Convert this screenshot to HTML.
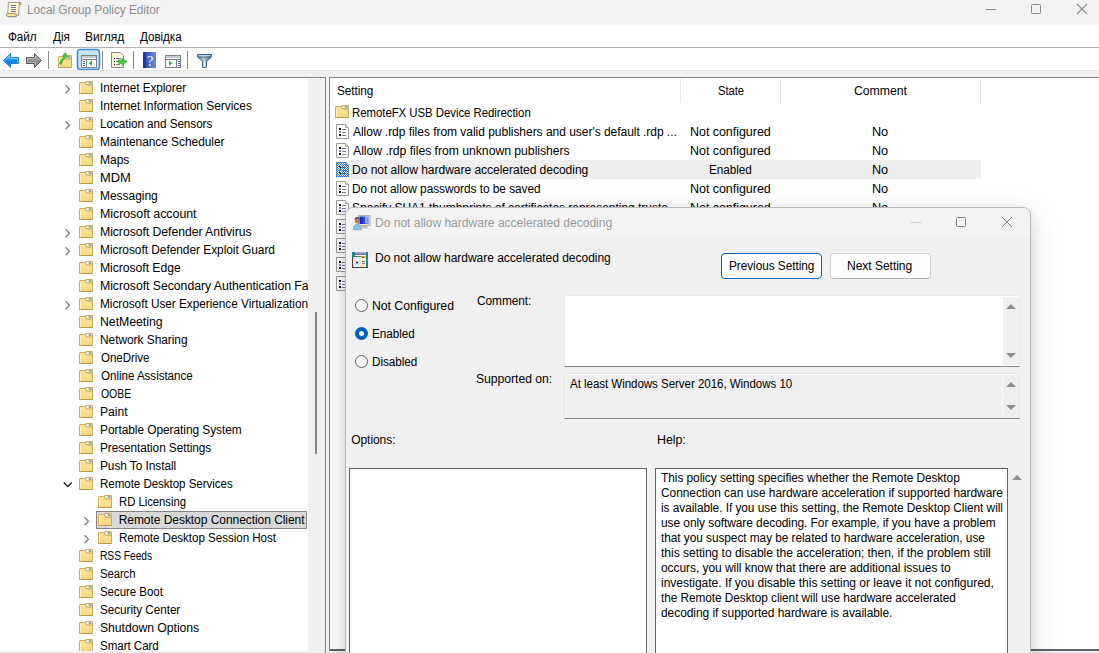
<!DOCTYPE html><html><head><meta charset="utf-8"><style>
*{box-sizing:border-box;margin:0;padding:0}
html,body{width:1099px;height:653px;overflow:hidden;background:#f0f0f0}
body{position:relative;font-family:"Liberation Sans",sans-serif;font-size:12px;color:#000;letter-spacing:-0.05px}
.a{position:absolute;white-space:nowrap}
.t{position:absolute;line-height:18px;height:18px;white-space:nowrap}
#title{left:0;top:0;width:1099px;height:25px;background:#f3f3f3}
#menubar{left:0;top:25px;width:1099px;height:22px;background:#fff}
#menuline{left:0;top:47px;width:1099px;height:1px;background:#b2b2b2}
#toolbar{left:0;top:48px;width:1099px;height:22px;background:#fff}
#strip{left:0;top:70px;width:1099px;height:7px;background:#f0f0f0;border-top:1px solid #e6e6e6}
#lpane{left:0;top:77px;width:326px;height:574px;background:#fff;border-top:1px solid #828790;border-right:1px solid #828790}
#lborder{left:325px;top:77px;width:1px;height:576px;background:#828790}
#lscroll{left:308px;top:79px;width:17px;height:572px;background:#f0f0f0}
#rpane{left:329px;top:77px;width:770px;height:574px;background:#fff;border-top:1px solid #828790;border-left:1px solid #828790;border-bottom:2px solid #5f636b}
</style></head><body>
<svg width="0" height="0" style="position:absolute"><defs>
<linearGradient id="fg" x1="0" y1="0" x2="0" y2="1"><stop offset="0" stop-color="#fce7a0"/><stop offset="1" stop-color="#f6d77e"/></linearGradient>
<g id="fold">
<path d="M6.5 4 V1.2 Q6.5 0.5 7.2 0.5 H12.8 Q13.5 0.5 13.5 1.2 V4" fill="#f2d78a" stroke="#c9a857" stroke-width="1"/>
<rect x="7.5" y="1.4" width="2.4" height="1.4" fill="#fff"/><rect x="9.8" y="1.4" width="2.4" height="1.4" fill="#4d9de6"/>
<path d="M0.5 12.5 V2.2 Q0.5 1.5 1.2 1.5 H5.8 L7.3 4.2 H13.5 V12.5 Z" fill="url(#fg)" stroke="#cdab58" stroke-width="1"/>
<path d="M1.5 3 V12" stroke="#fdf0c4" stroke-width="1"/>
<path d="M0.5 12.5 H13.5" stroke="#b9994a" stroke-width="1"/>
</g>
<pattern id="dith" width="2" height="2" patternUnits="userSpaceOnUse"><rect width="1" height="1" fill="#1a6fe0"/><rect x="1" y="1" width="1" height="1" fill="#1a6fe0"/></pattern>
<g id="pol">
<path d="M0.5 0.5 H9.5 L12.5 3.5 V14.5 H0.5 Z" fill="#fff" stroke="#9a9a9a"/>
<path d="M9.5 0.5 V3.5 H12.5" fill="#ddd" stroke="#aaa"/>
<rect x="3" y="4" width="2" height="2" fill="#111"/><rect x="3" y="7" width="2" height="2" fill="#8a88b0"/><rect x="3" y="10" width="2" height="2" fill="#111"/>
<path d="M6 5.5 H10 M6 8.5 H10 M6 11.5 H10" stroke="#7a78a0" stroke-width="1"/>
</g>
</defs></svg>
<div class="a" id="title"></div>
<div class="a" id="menubar"></div>
<div class="a" id="menuline"></div>
<div class="a" id="toolbar"></div>
<div class="a" id="strip"></div>
<div class="a" id="lpane"></div>
<div class="a" id="lscroll"></div>
<div class="a" id="lborder"></div>
<div class="a" id="rpane"></div>
<div class="t" style="left:26.51px;top:1px;color:#8c8c8c;transform:scaleX(0.9887);transform-origin:0 0">Local Group Policy Editor</div>
<div class="t" style="left:8.20px;top:28px;transform:scaleX(0.9724);transform-origin:0 0">Файл</div>
<div class="t" style="left:52.80px;top:28px;transform:scaleX(0.9824);transform-origin:0 0">Дія</div>
<div class="t" style="left:84.89px;top:28px;transform:scaleX(1.0053);transform-origin:0 0">Вигляд</div>
<div class="t" style="left:139.80px;top:28px;transform:scaleX(0.9721);transform-origin:0 0">Довідка</div>
<div class="a" style="left:0;top:0;width:308px;height:651px;overflow:hidden">
<svg class="a" width="8" height="12" style="left:64px;top:84px"><path d="M1.5 1.3 L5.5 5.3 L1.5 9.3" fill="none" stroke="#7c7c7c" stroke-width="1.25"/></svg>
<svg class="a" width="14" height="14" style="left:79px;top:81px"><use href="#fold"/></svg>
<div class="t" style="left:99.62px;top:79px;transform:scaleX(0.9793);transform-origin:0 0">Internet Explorer</div>
<svg class="a" width="14" height="14" style="left:79px;top:99px"><use href="#fold"/></svg>
<div class="t" style="left:99.60px;top:97px;transform:scaleX(0.9993);transform-origin:0 0">Internet Information Services</div>
<svg class="a" width="8" height="12" style="left:64px;top:120px"><path d="M1.5 1.3 L5.5 5.3 L1.5 9.3" fill="none" stroke="#7c7c7c" stroke-width="1.25"/></svg>
<svg class="a" width="14" height="14" style="left:79px;top:117px"><use href="#fold"/></svg>
<div class="t" style="left:99.62px;top:115px;transform:scaleX(0.9754);transform-origin:0 0">Location and Sensors</div>
<svg class="a" width="14" height="14" style="left:79px;top:135px"><use href="#fold"/></svg>
<div class="t" style="left:99.60px;top:133px;transform:scaleX(0.9952);transform-origin:0 0">Maintenance Scheduler</div>
<svg class="a" width="14" height="14" style="left:79px;top:153px"><use href="#fold"/></svg>
<div class="t" style="left:99.60px;top:151px;transform:scaleX(1.0036);transform-origin:0 0">Maps</div>
<svg class="a" width="14" height="14" style="left:79px;top:171px"><use href="#fold"/></svg>
<div class="t" style="left:99.53px;top:169px;transform:scaleX(1.0741);transform-origin:0 0">MDM</div>
<svg class="a" width="14" height="14" style="left:79px;top:189px"><use href="#fold"/></svg>
<div class="t" style="left:99.60px;top:187px;transform:scaleX(1.0018);transform-origin:0 0">Messaging</div>
<svg class="a" width="14" height="14" style="left:79px;top:207px"><use href="#fold"/></svg>
<div class="t" style="left:99.56px;top:205px;transform:scaleX(1.0355);transform-origin:0 0">Microsoft account</div>
<svg class="a" width="8" height="12" style="left:64px;top:228px"><path d="M1.5 1.3 L5.5 5.3 L1.5 9.3" fill="none" stroke="#7c7c7c" stroke-width="1.25"/></svg>
<svg class="a" width="14" height="14" style="left:79px;top:225px"><use href="#fold"/></svg>
<div class="t" style="left:99.58px;top:223px;transform:scaleX(1.0196);transform-origin:0 0">Microsoft Defender Antivirus</div>
<svg class="a" width="8" height="12" style="left:64px;top:246px"><path d="M1.5 1.3 L5.5 5.3 L1.5 9.3" fill="none" stroke="#7c7c7c" stroke-width="1.25"/></svg>
<svg class="a" width="14" height="14" style="left:79px;top:243px"><use href="#fold"/></svg>
<div class="t" style="left:99.61px;top:241px;transform:scaleX(0.9949);transform-origin:0 0">Microsoft Defender Exploit Guard</div>
<svg class="a" width="14" height="14" style="left:79px;top:261px"><use href="#fold"/></svg>
<div class="t" style="left:99.58px;top:259px;transform:scaleX(1.0167);transform-origin:0 0">Microsoft Edge</div>
<svg class="a" width="14" height="14" style="left:79px;top:279px"><use href="#fold"/></svg>
<div class="t" style="left:99.58px;top:277px;transform:scaleX(1.0246);transform-origin:0 0">Microsoft Secondary Authentication Factor</div>
<svg class="a" width="8" height="12" style="left:64px;top:300px"><path d="M1.5 1.3 L5.5 5.3 L1.5 9.3" fill="none" stroke="#7c7c7c" stroke-width="1.25"/></svg>
<svg class="a" width="14" height="14" style="left:79px;top:297px"><use href="#fold"/></svg>
<div class="t" style="left:99.61px;top:295px;transform:scaleX(0.9880);transform-origin:0 0">Microsoft User Experience Virtualization</div>
<svg class="a" width="14" height="14" style="left:79px;top:315px"><use href="#fold"/></svg>
<div class="t" style="left:99.57px;top:313px;transform:scaleX(1.0267);transform-origin:0 0">NetMeeting</div>
<svg class="a" width="14" height="14" style="left:79px;top:333px"><use href="#fold"/></svg>
<div class="t" style="left:99.60px;top:331px;transform:scaleX(0.9954);transform-origin:0 0">Network Sharing</div>
<svg class="a" width="14" height="14" style="left:79px;top:351px"><use href="#fold"/></svg>
<div class="t" style="left:100.60px;top:349px;transform:scaleX(0.9600);transform-origin:0 0">OneDrive</div>
<svg class="a" width="14" height="14" style="left:79px;top:369px"><use href="#fold"/></svg>
<div class="t" style="left:100.60px;top:367px;transform:scaleX(0.9695);transform-origin:0 0">Online Assistance</div>
<svg class="a" width="14" height="14" style="left:79px;top:387px"><use href="#fold"/></svg>
<div class="t" style="left:100.60px;top:385px;transform:scaleX(0.8735);transform-origin:0 0">OOBE</div>
<svg class="a" width="14" height="14" style="left:79px;top:405px"><use href="#fold"/></svg>
<div class="t" style="left:99.58px;top:403px;transform:scaleX(1.0154);transform-origin:0 0">Paint</div>
<svg class="a" width="14" height="14" style="left:79px;top:423px"><use href="#fold"/></svg>
<div class="t" style="left:99.61px;top:421px;transform:scaleX(0.9922);transform-origin:0 0">Portable Operating System</div>
<svg class="a" width="14" height="14" style="left:79px;top:441px"><use href="#fold"/></svg>
<div class="t" style="left:99.62px;top:439px;transform:scaleX(0.9830);transform-origin:0 0">Presentation Settings</div>
<svg class="a" width="14" height="14" style="left:79px;top:459px"><use href="#fold"/></svg>
<div class="t" style="left:99.61px;top:457px;transform:scaleX(0.9882);transform-origin:0 0">Push To Install</div>
<svg class="a" width="12" height="8" style="left:62px;top:481px"><path d="M1.8 1.5 L5.8 5.5 L9.8 1.5" fill="none" stroke="#222" stroke-width="1.4"/></svg>
<svg class="a" width="14" height="14" style="left:79px;top:477px"><use href="#fold"/></svg>
<div class="t" style="left:99.64px;top:475px;transform:scaleX(0.9640);transform-origin:0 0">Remote Desktop Services</div>
<svg class="a" width="14" height="14" style="left:98px;top:495px"><use href="#fold"/></svg>
<div class="t" style="left:118.75px;top:493px;transform:scaleX(0.9471);transform-origin:0 0">RD Licensing</div>
<div class="a" style="left:96px;top:511px;width:211px;height:18px;background:#d9d9d9;border:1px solid #858585"></div>
<svg class="a" width="8" height="12" style="left:83px;top:516px"><path d="M1.5 1.3 L5.5 5.3 L1.5 9.3" fill="none" stroke="#7c7c7c" stroke-width="1.25"/></svg>
<svg class="a" width="14" height="14" style="left:98px;top:513px"><use href="#fold"/></svg>
<div class="t" style="left:118.70px;top:511px;transform:scaleX(1.0000);transform-origin:0 0">Remote Desktop Connection Client</div>
<svg class="a" width="8" height="12" style="left:83px;top:534px"><path d="M1.5 1.3 L5.5 5.3 L1.5 9.3" fill="none" stroke="#7c7c7c" stroke-width="1.25"/></svg>
<svg class="a" width="14" height="14" style="left:98px;top:531px"><use href="#fold"/></svg>
<div class="t" style="left:118.73px;top:529px;transform:scaleX(0.9683);transform-origin:0 0">Remote Desktop Session Host</div>
<svg class="a" width="14" height="14" style="left:79px;top:549px"><use href="#fold"/></svg>
<div class="t" style="left:99.74px;top:547px;transform:scaleX(0.8550);transform-origin:0 0">RSS Feeds</div>
<svg class="a" width="14" height="14" style="left:79px;top:567px"><use href="#fold"/></svg>
<div class="t" style="left:99.66px;top:565px;transform:scaleX(0.9389);transform-origin:0 0">Search</div>
<svg class="a" width="14" height="14" style="left:79px;top:585px"><use href="#fold"/></svg>
<div class="t" style="left:99.64px;top:583px;transform:scaleX(0.9585);transform-origin:0 0">Secure Boot</div>
<svg class="a" width="14" height="14" style="left:79px;top:603px"><use href="#fold"/></svg>
<div class="t" style="left:99.62px;top:601px;transform:scaleX(0.9790);transform-origin:0 0">Security Center</div>
<svg class="a" width="14" height="14" style="left:79px;top:621px"><use href="#fold"/></svg>
<div class="t" style="left:99.58px;top:619px;transform:scaleX(1.0198);transform-origin:0 0">Shutdown Options</div>
<svg class="a" width="14" height="14" style="left:79px;top:639px"><use href="#fold"/></svg>
<div class="t" style="left:99.63px;top:637px;transform:scaleX(0.9650);transform-origin:0 0">Smart Card</div>
</div>
<div class="a" style="left:315px;top:312px;width:2px;height:142px;background:#858585"></div>
<div class="t" style="left:337.32px;top:82px;transform:scaleX(0.9806);transform-origin:0 0">Setting</div>
<div class="a" style="left:680px;top:79px;width:1px;height:24px;background:#e5e5e5"></div>
<div class="a" style="left:780px;top:79px;width:1px;height:24px;background:#e5e5e5"></div>
<div class="a" style="left:980px;top:79px;width:1px;height:24px;background:#e5e5e5"></div>
<div class="t" style="left:718.07px;top:82px;transform:scaleX(0.9333);transform-origin:0 0">State</div>
<div class="t" style="left:854.30px;top:82px;transform:scaleX(1.0231);transform-origin:0 0">Comment</div>
<svg class="a" width="14" height="14" style="left:335px;top:105px"><use href="#fold"/></svg>
<div class="t" style="left:352.15px;top:104px;transform:scaleX(0.9513);transform-origin:0 0">RemoteFX USB Device Redirection</div>
<svg class="a" width="14" height="16" style="left:336px;top:124px"><use href="#pol"/></svg>
<div class="t" style="left:353.10px;top:123px;transform:scaleX(1.0040);transform-origin:0 0">Allow .rdp files from valid publishers and user's default .rdp ...</div>
<div class="t" style="left:690.16px;top:123px;transform:scaleX(1.0434);transform-origin:0 0">Not configured</div>
<div class="t" style="left:872.44px;top:123px;transform:scaleX(1.0571);transform-origin:0 0">No</div>
<svg class="a" width="14" height="16" style="left:336px;top:143px"><use href="#pol"/></svg>
<div class="t" style="left:353.10px;top:142px;transform:scaleX(1.0217);transform-origin:0 0">Allow .rdp files from unknown publishers</div>
<div class="t" style="left:690.16px;top:142px;transform:scaleX(1.0434);transform-origin:0 0">Not configured</div>
<div class="t" style="left:872.44px;top:142px;transform:scaleX(1.0571);transform-origin:0 0">No</div>
<div class="a" style="left:351px;top:160px;width:630px;height:19px;background:#eeeeee"></div>
<svg class="a" width="14" height="16" style="left:336px;top:162px"><use href="#pol"/></svg>
<svg class="a" width="14" height="16" style="left:336px;top:162px"><path d="M0 0 H10 L13 3 V15 H0 Z" fill="url(#dith)"/></svg>
<div class="t" style="left:352.09px;top:161px;transform:scaleX(1.0064);transform-origin:0 0">Do not allow hardware accelerated decoding</div>
<div class="t" style="left:709.42px;top:161px;transform:scaleX(0.9810);transform-origin:0 0">Enabled</div>
<div class="t" style="left:872.44px;top:161px;transform:scaleX(1.0571);transform-origin:0 0">No</div>
<svg class="a" width="14" height="16" style="left:336px;top:181px"><use href="#pol"/></svg>
<div class="t" style="left:352.11px;top:180px;transform:scaleX(0.9905);transform-origin:0 0">Do not allow passwords to be saved</div>
<div class="t" style="left:690.16px;top:180px;transform:scaleX(1.0434);transform-origin:0 0">Not configured</div>
<div class="t" style="left:872.44px;top:180px;transform:scaleX(1.0571);transform-origin:0 0">No</div>
<svg class="a" width="14" height="16" style="left:336px;top:200px"><use href="#pol"/></svg>
<div class="t" style="left:352.10px;top:199px;transform:scaleX(1.0045);transform-origin:0 0">Specify SHA1 thumbprints of certificates representing truste</div>
<div class="t" style="left:690.16px;top:199px;transform:scaleX(1.0434);transform-origin:0 0">Not configured</div>
<div class="t" style="left:872.44px;top:199px;transform:scaleX(1.0571);transform-origin:0 0">No</div>
<svg class="a" width="14" height="16" style="left:336px;top:219px"><use href="#pol"/></svg>
<div class="t" style="left:353.1px;top:218px">x</div>
<div class="t" style="left:690.16px;top:218px;transform:scaleX(1.0434);transform-origin:0 0">Not configured</div>
<div class="t" style="left:872.44px;top:218px;transform:scaleX(1.0571);transform-origin:0 0">No</div>
<svg class="a" width="14" height="16" style="left:336px;top:238px"><use href="#pol"/></svg>
<div class="t" style="left:353.1px;top:237px">x</div>
<div class="t" style="left:690.16px;top:237px;transform:scaleX(1.0434);transform-origin:0 0">Not configured</div>
<div class="t" style="left:872.44px;top:237px;transform:scaleX(1.0571);transform-origin:0 0">No</div>
<svg class="a" width="14" height="16" style="left:336px;top:257px"><use href="#pol"/></svg>
<div class="t" style="left:353.1px;top:256px">x</div>
<div class="t" style="left:690.16px;top:256px;transform:scaleX(1.0434);transform-origin:0 0">Not configured</div>
<div class="t" style="left:872.44px;top:256px;transform:scaleX(1.0571);transform-origin:0 0">No</div>
<svg class="a" width="14" height="16" style="left:336px;top:276px"><use href="#pol"/></svg>
<div class="t" style="left:353.1px;top:275px">x</div>
<div class="t" style="left:690.16px;top:275px;transform:scaleX(1.0434);transform-origin:0 0">Not configured</div>
<div class="t" style="left:872.44px;top:275px;transform:scaleX(1.0571);transform-origin:0 0">No</div>
<svg class="a" width="24" height="20" style="left:2px;top:0px">
<path d="M6.5 2.5 H17.5 L16.5 15.5 H5.5 Z" fill="#fdf5d0" stroke="#a0a0a0" stroke-width="1"/>
<path d="M17 2.5 Q19.5 2.5 18.5 5" fill="none" stroke="#a89048" stroke-width="1.3"/>
<path d="M9 5.5 H14 M9 7.5 H14 M9 9.5 H14 M9 11.5 H14" stroke="#72709c" stroke-width="1"/>
<rect x="4.5" y="13.5" width="10" height="3" rx="1.5" fill="#f3e3a0" stroke="#b49a50" stroke-width="1"/>
<path d="M6 16.8 H15" stroke="#8a8a9a" stroke-width="0.8"/>
</svg>
<div class="a" style="left:986px;top:9px;width:10px;height:1px;background:#8a8a8a"></div>
<div class="a" style="left:1031px;top:4px;width:10px;height:10px;border:1px solid #8a8a8a;border-radius:1.5px"></div>
<svg class="a" width="12" height="12" style="left:1076px;top:3px"><path d="M1 1 L11 11 M11 1 L1 11" stroke="#8a8a8a" stroke-width="1.1"/></svg>
<svg class="a" width="230" height="22" style="left:0;top:48px" viewBox="0 48 230 22">
<defs>
<linearGradient id="bl" x1="0" y1="0" x2="0" y2="1"><stop offset="0" stop-color="#5cc3fb"/><stop offset="0.6" stop-color="#0a84e0"/><stop offset="1" stop-color="#1e9cf2"/></linearGradient>
<linearGradient id="gr" x1="0" y1="0" x2="0" y2="1"><stop offset="0" stop-color="#b8b8b8"/><stop offset="0.6" stop-color="#888"/><stop offset="1" stop-color="#a8a8a8"/></linearGradient>
<linearGradient id="fn" x1="0" y1="0" x2="1" y2="0"><stop offset="0" stop-color="#5a7890"/><stop offset="0.45" stop-color="#b8d4e8"/><stop offset="1" stop-color="#3a5670"/></linearGradient>
<linearGradient id="hb" x1="0" y1="0" x2="1" y2="0"><stop offset="0" stop-color="#2a46b0"/><stop offset="1" stop-color="#6a8ae0"/></linearGradient>
</defs>
<path d="M3.5 60.5 L10.5 53.5 V57.5 H18.5 V63.5 H10.5 V67.5 Z" fill="url(#bl)" stroke="#2d7fd0" stroke-width="1" stroke-linejoin="round"/>
<path d="M5.2 60.5 L9.5 56 V58.5 H17.5 V62.5" fill="none" stroke="#8ad8ff" stroke-width="0.8" opacity="0.8"/>
<path d="M41.5 60.5 L34.5 53.5 V57.5 H26.5 V63.5 H34.5 V67.5 Z" fill="url(#gr)" stroke="#5a5a5a" stroke-width="1" stroke-linejoin="round"/>
<path d="M39.8 60.5 L35.5 56 V58.5 H27.5 V62.5 H35.5 V65" fill="none" stroke="#c8c8c8" stroke-width="0.8" opacity="0.8"/>
<rect x="48" y="51" width="1" height="18" fill="#8c8c8c"/>
<use href="#fold" x="58" y="55"/>
<path d="M59.5 63.5 Q60.5 59 63.5 57.5 L62.5 56 L65.5 52.5 L67.5 57 L65.8 57.2 Q62.8 59.5 61 64.5 Z" fill="#48d048" stroke="#2aa02a" stroke-width="0.7"/>
<rect x="77.5" y="49.5" width="22" height="20" rx="3" fill="#cce4f7" stroke="#3a8ee0" stroke-width="1.6"/>
<rect x="81.5" y="55.5" width="15" height="12" fill="#fff" stroke="#7c808a"/>
<rect x="82" y="56" width="14" height="2" fill="#c8ccd4"/>
<rect x="82" y="59" width="14" height="1" fill="#7c808a"/>
<rect x="86" y="60" width="1" height="7" fill="#7c808a"/>
<rect x="83" y="61" width="2" height="1" fill="#3a70c0"/><rect x="83" y="63" width="2" height="1" fill="#3a70c0"/><rect x="83" y="65" width="2" height="1" fill="#3a70c0"/>
<path d="M92 60.5 V66 L88.5 63.2 Z" fill="#3cb83c"/>
<rect x="102" y="51" width="1" height="18" fill="#8c8c8c"/>
<path d="M111.5 52.5 H120.5 L123.5 55.5 V67.5 H111.5 Z" fill="#fdf5d8" stroke="#8a8a8a"/>
<circle cx="114.5" cy="58.5" r="0.7" fill="#222"/><circle cx="114.5" cy="61.5" r="0.7" fill="#222"/><circle cx="114.5" cy="64.5" r="0.7" fill="#222"/>
<path d="M116 58.5 H121 M116 61.5 H120 M116 64.5 H120" stroke="#7670b0"/>
<path d="M118.5 60 H122 V58 L127 61.7 L122 65.5 V63.5 H118.5 Z" fill="#4ccc40" stroke="#30a030" stroke-width="0.5"/>
<rect x="133" y="51" width="1" height="18" fill="#8c8c8c"/>
<rect x="143" y="52" width="13" height="16" fill="url(#hb)"/>
<rect x="143" y="52" width="3" height="16" fill="#1c3898"/>
<text x="150" y="66" font-family="Liberation Serif" font-size="15" fill="#fff" text-anchor="middle">?</text>
<rect x="165.5" y="55.5" width="15" height="12" fill="#fff" stroke="#7c808a"/>
<rect x="166" y="56" width="14" height="2" fill="#c8ccd4"/>
<rect x="166" y="59" width="14" height="1" fill="#7c808a"/>
<rect x="176" y="60" width="1" height="7" fill="#7c808a"/>
<rect x="178" y="61" width="2" height="1" fill="#3a70c0"/><rect x="178" y="63" width="2" height="1" fill="#3a70c0"/><rect x="178" y="65" width="2" height="1" fill="#3a70c0"/>
<path d="M169 60.5 V66 L172.5 63.2 Z" fill="#3cb83c"/>
<rect x="187" y="51" width="1" height="18" fill="#8c8c8c"/>
<path d="M197.5 54.5 H211.5 V57 L206.5 61.5 V67 Q206.5 67.6 205.8 67.6 H203.2 Q202.5 67.6 202.5 67 V61.5 L197.5 57 Z" fill="url(#fn)" stroke="#4a6478" stroke-width="1"/>
<path d="M198.5 55.6 H210.5" stroke="#b0daf8" stroke-width="1"/>
<path d="M198.5 57.2 H210.5" stroke="#4a6478" stroke-width="0.8"/>
<path d="M204.5 62 V66.8" stroke="#e0f4ff" stroke-width="1.3"/>
</svg>
<div class="a" style="left:345px;top:207px;width:686px;height:460px;background:#f0f0f0;border:1px solid #b9b9b9;border-radius:8px 8px 0 0;box-shadow:0 3px 10px rgba(0,0,0,0.10),0 10px 30px rgba(0,0,0,0.16)"></div>
<div class="a" style="left:346px;top:208px;width:684px;height:30px;background:#f3f3f3;border-radius:7px 7px 0 0"></div>
<svg class="a" width="18" height="16" style="left:353px;top:215px">
<defs><linearGradient id="scr" x1="0" y1="0" x2="1" y2="0"><stop offset="0" stop-color="#0a20d8"/><stop offset="0.5" stop-color="#2848f0"/><stop offset="1" stop-color="#a0b8ff"/></linearGradient></defs>
<rect x="5.5" y="0.5" width="11.5" height="10" fill="#e6e2d4" stroke="#b4b0a4"/>
<rect x="6.5" y="1.5" width="9.5" height="7.5" fill="url(#scr)"/>
<rect x="12" y="2" width="2" height="6" fill="#c8d4ff" opacity="0.6"/>
<rect x="9" y="11" width="5.5" height="2.5" fill="#c4c0b4"/>
<ellipse cx="4.2" cy="5.6" rx="2.5" ry="2.9" fill="#c08050"/>
<path d="M1.6 5 Q1.6 2 4.2 2 Q6.8 2 6.8 5 Q5.6 3.6 4.2 3.8 Q2.8 3.6 1.6 5Z" fill="#505050"/>
<path d="M0.3 14.8 Q0.3 9.6 4.2 9.2 Q8.2 9.6 8.4 14.8 Z" fill="#8cc4ec" stroke="#5e94c4" stroke-width="0.6"/>
</svg>
<div class="t" style="left:374.59px;top:214px;color:#9a9a9a;transform:scaleX(1.0103);transform-origin:0 0">Do not allow hardware accelerated decoding</div>
<div class="a" style="left:911px;top:222px;width:10px;height:1px;background:#c8c8c8"></div>
<div class="a" style="left:956px;top:217px;width:10px;height:10px;border:1px solid #828282;border-radius:1.5px"></div>
<svg class="a" width="12" height="12" style="left:1001px;top:216px"><path d="M1 1 L11 11 M11 1 L1 11" stroke="#858585" stroke-width="1"/></svg>
<svg class="a" width="17" height="17" style="left:352px;top:252px">
<defs><linearGradient id="lav" x1="0" y1="0" x2="0" y2="1"><stop offset="0" stop-color="#b8b8e8"/><stop offset="1" stop-color="#6a68a8"/></linearGradient></defs>
<rect x="0" y="0" width="16" height="16" fill="#f4f4f4"/>
<rect x="0" y="0" width="3" height="5" fill="#1a8a80"/><rect x="14" y="0" width="2" height="16" fill="#1a8a80"/>
<rect x="3" y="0" width="11" height="3" fill="url(#lav)"/>
<rect x="3" y="3" width="11" height="1" fill="#fff"/>
<rect x="3" y="4" width="6" height="1" fill="#3a8a4a"/><rect x="9" y="4" width="5" height="1.5" fill="#f0c000"/><circle cx="11" cy="5.3" r="0.8" fill="#111"/>
<rect x="0" y="5" width="1.2" height="11" fill="#444"/><rect x="0" y="15" width="16" height="1" fill="#444"/>
<circle cx="5" cy="10.5" r="4" fill="#fafafa"/>
<path d="M5 10.5 L1.5 8.5 A4 4 0 0 1 4 6.6 Z" fill="#f8c8e8"/><path d="M5 10.5 L5.5 6.5 A4 4 0 0 1 8.6 9 Z" fill="#d0f8c8"/>
<path d="M5 10.5 L8.8 11.5 A4 4 0 0 1 6 14.4 Z" fill="#c8e8f8"/><path d="M5 10.5 L3.5 14.2 A4 4 0 0 1 1.2 11.5 Z" fill="#d8d0f8"/>
<circle cx="5" cy="10.5" r="1.1" fill="#333"/>
<rect x="9" y="6" width="5" height="8" fill="#fff4c4"/>
<rect x="10" y="9" width="3" height="1" fill="#7a78a0"/><rect x="10" y="11" width="3" height="1" fill="#7a78a0"/>
<rect x="8" y="13.5" width="5" height="1" fill="#f2d870"/>
</svg>
<div class="t" style="left:375.40px;top:249px;transform:scaleX(1.0043);transform-origin:0 0">Do not allow hardware accelerated decoding</div>
<div class="a" style="left:721px;top:253px;width:101px;height:26px;background:#fdfdfd;border:1px solid #0067c0;border-radius:4px"></div>
<div class="t" style="left:728.62px;top:257px;transform:scaleX(0.9847);transform-origin:0 0">Previous Setting</div>
<div class="a" style="left:830px;top:253px;width:101px;height:26px;background:#fdfdfd;border:1px solid #d0d0d0;border-bottom-color:#b8b8b8;border-radius:4px"></div>
<div class="t" style="left:847.29px;top:257px;transform:scaleX(1.0063);transform-origin:0 0">Next Setting</div>
<div class="a" style="left:355px;top:299px;width:13px;height:13px;border-radius:50%;border:1px solid #5e5e5e;background:#f6f6f6"></div>
<div class="t" style="left:371.58px;top:297px;transform:scaleX(1.0241);transform-origin:0 0">Not Configured</div>
<div class="a" style="left:355px;top:327px;width:13px;height:13px;border-radius:50%;background:#005fb8"></div>
<div class="a" style="left:359px;top:331px;width:5px;height:5px;border-radius:50%;background:#fff"></div>
<div class="t" style="left:371.62px;top:325px;transform:scaleX(0.9786);transform-origin:0 0">Enabled</div>
<div class="a" style="left:355px;top:355px;width:13px;height:13px;border-radius:50%;border:1px solid #5e5e5e;background:#f6f6f6"></div>
<div class="t" style="left:371.62px;top:353px;transform:scaleX(0.9778);transform-origin:0 0">Disabled</div>
<div class="t" style="left:477.00px;top:292px;transform:scaleX(0.9889);transform-origin:0 0">Comment:</div>
<div class="t" style="left:475.98px;top:370px;transform:scaleX(1.0178);transform-origin:0 0">Supported on:</div>
<div class="a" style="left:564px;top:295px;width:456px;height:72px;background:#fff;border:1px solid #e8e8e8;border-bottom:1px solid #858585"></div>
<div class="a" style="left:1003px;top:297px;width:16px;height:68px;background:#f0f0f0"></div>
<div class="a" style="left:564px;top:373px;width:456px;height:46px;background:#efefef;border:1px solid #e6e6e6;border-bottom:1px solid #858585;box-shadow:inset 1px 1px 0 #fafafa"></div>
<div class="a" style="left:1002px;top:375px;width:1px;height:42px;background:#fafafa"></div>
<svg class="a" width="1099" height="653" style="left:0;top:0;pointer-events:none"><path d="M1006 309 L1011 304 L1016 309 Z" fill="#8e8e8e"/></svg>
<svg class="a" width="1099" height="653" style="left:0;top:0;pointer-events:none"><path d="M1006 353 L1011 358 L1016 353 Z" fill="#8e8e8e"/></svg>
<svg class="a" width="1099" height="653" style="left:0;top:0;pointer-events:none"><path d="M1006 387 L1011 382 L1016 387 Z" fill="#8e8e8e"/></svg>
<svg class="a" width="1099" height="653" style="left:0;top:0;pointer-events:none"><path d="M1006 405 L1011 410 L1016 405 Z" fill="#8e8e8e"/></svg>
<div class="t" style="left:569.50px;top:375px;transform:scaleX(0.9628);transform-origin:0 0">At least Windows Server 2016, Windows 10</div>
<div class="t" style="left:351.20px;top:431px;transform:scaleX(1.0000);transform-origin:0 0">Options:</div>
<div class="t" style="left:656.57px;top:431px;transform:scaleX(1.0346);transform-origin:0 0">Help:</div>
<div class="a" style="left:349px;top:468px;width:298px;height:200px;background:#fff;border:1px solid #646464"></div>
<div class="a" style="left:655px;top:468px;width:353px;height:200px;background:#fff;border:1px solid #646464"></div>
<svg class="a" width="1099" height="653" style="left:0;top:0"><path d="M1012 480 L1017 475 L1022 480 Z" fill="#8e8e8e"/></svg>
<div class="t" style="left:660.80px;top:469px;transform:scaleX(0.9914);transform-origin:0 0">This policy setting specifies whether the Remote Desktop</div>
<div class="t" style="left:660.80px;top:484px;transform:scaleX(0.9942);transform-origin:0 0">Connection can use hardware acceleration if supported hardware</div>
<div class="t" style="left:660.80px;top:499px;transform:scaleX(0.9899);transform-origin:0 0">is available. If you use this setting, the Remote Desktop Client will</div>
<div class="t" style="left:660.80px;top:514px;transform:scaleX(0.9926);transform-origin:0 0">use only software decoding. For example, if you have a problem</div>
<div class="t" style="left:660.80px;top:529px;transform:scaleX(0.9878);transform-origin:0 0">that you suspect may be related to hardware acceleration, use</div>
<div class="t" style="left:660.80px;top:544px;transform:scaleX(1.0089);transform-origin:0 0">this setting to disable the acceleration; then, if the problem still</div>
<div class="t" style="left:660.80px;top:559px;transform:scaleX(0.9986);transform-origin:0 0">occurs, you will know that there are additional issues to</div>
<div class="t" style="left:660.80px;top:574px;transform:scaleX(1.0082);transform-origin:0 0">investigate. If you disable this setting or leave it not configured,</div>
<div class="t" style="left:660.80px;top:589px;transform:scaleX(0.9849);transform-origin:0 0">the Remote Desktop client will use hardware accelerated</div>
<div class="t" style="left:660.80px;top:604px;transform:scaleX(0.9974);transform-origin:0 0">decoding if supported hardware is available.</div>
</body></html>
